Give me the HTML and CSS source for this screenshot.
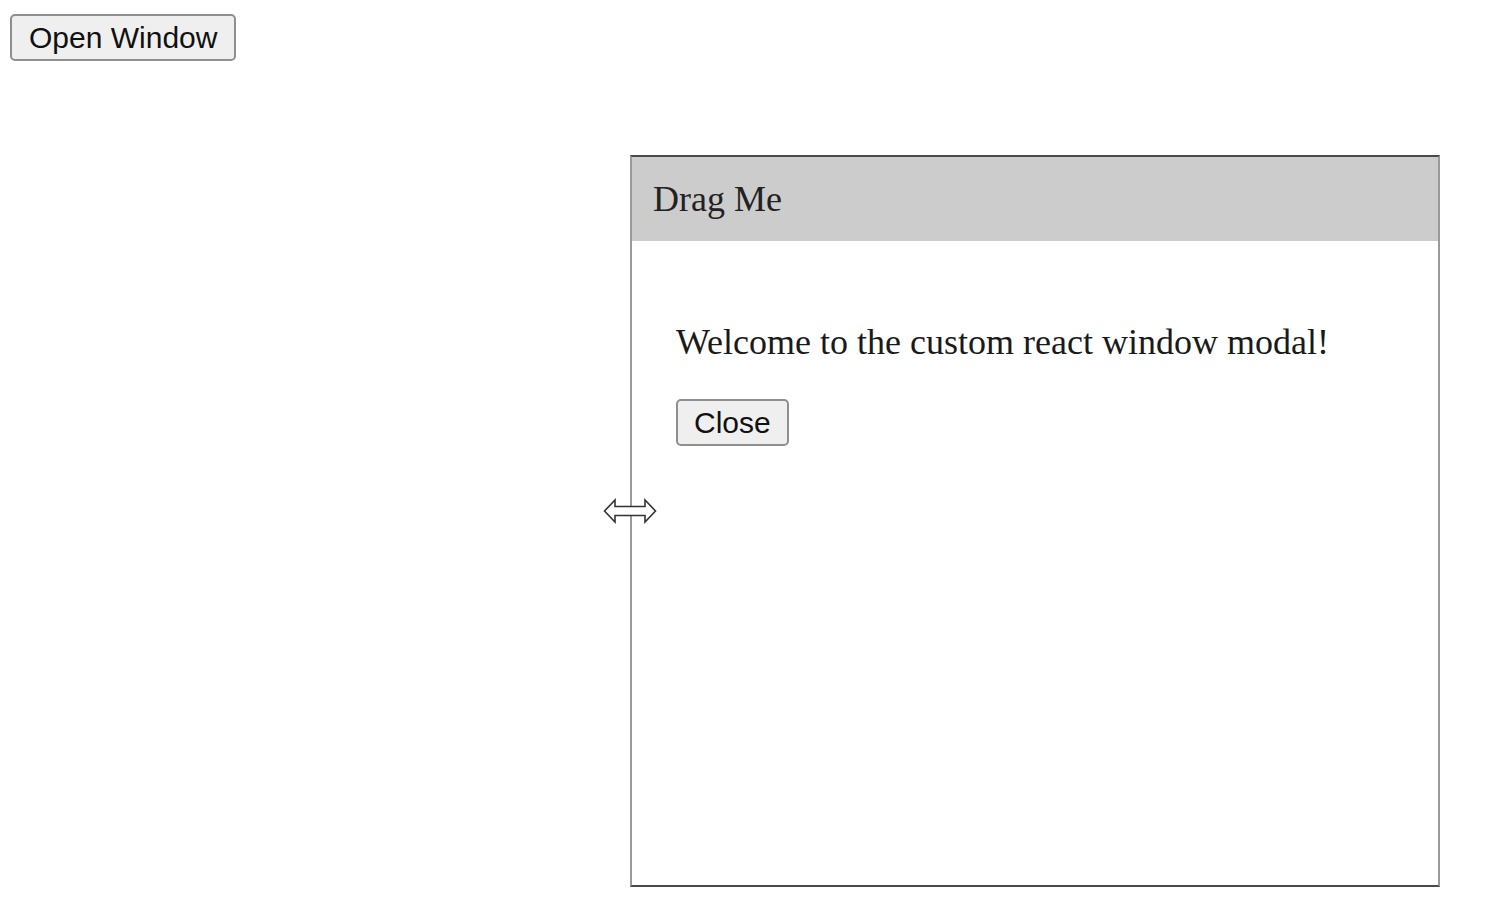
FILE: index.html
```html
<!DOCTYPE html>
<html lang="en">
<head>
    <meta charset="UTF-8" />
    <meta name="viewport" content="width=device-width, initial-scale=1" />
    <title>Custom React Window</title>
    <link rel="stylesheet" href="styles.css">
</head>
<body>
    <button class="btn open-button">Open Window</button>

    <div class="window">
        <div class="window-header">Drag Me</div>
        <div class="window-content">
            <p class="window-text">Welcome to the custom react window modal!</p>
            <button class="btn">Close</button>
        </div>
    </div>

    <!-- resize cursor sitting on the window's left edge -->
    <svg class="resize-cursor" width="54" height="26" viewBox="0 0 54 26">
        <path d="M1.5 13 L12 2 L12 8.5 L42 8.5 L42 2 L52.5 13 L42 24 L42 17.5 L12 17.5 L12 24 Z"
              fill="#fff" stroke="#333" stroke-width="1.6" stroke-linejoin="miter" />
    </svg>
</body>
</html>
```

FILE: styles.css
```css
body, html {
    margin: 0;
    padding: 0;
    height: 100%;
    background: #ffffff;
    overflow: hidden;
}
body {
    padding: 14px 10px;
    box-sizing: border-box;
    font-family: 'Liberation Serif', 'Times New Roman', serif;
    color: #1a1a1a;
}
.btn {
    font-family: 'Liberation Sans', Arial, sans-serif;
    font-size: 30px;
    line-height: 35px;
    color: #111;
    background-color: #efefef;
    border: 2px solid #8f8f8f;
    border-radius: 5px;
    padding: 4px 16px;
    cursor: pointer;
}
.btn:hover {
    background-color: #e5e5e5;
}
.open-button {
    padding: 4px 17px;
}
.window {
    position: absolute;
    left: 630px;
    top: 155px;
    width: 810px;
    height: 732px;
    box-sizing: border-box;
    border-top: 2px solid #4a4a4a;
    border-bottom: 2px solid #4a4a4a;
    border-left: 2px solid #9a9a9a;
    border-right: 2px solid #9a9a9a;
    background: #ffffff;
    display: flex;
    flex-direction: column;
}
.window-header {
    background-color: #cccccc;
    padding: 0 21px;
    height: 84px;
    display: flex;
    align-items: center;
    font-size: 36px;
    color: #222;
    cursor: move;
}
.window-content {
    padding: 45px 44px;
}
.window-text {
    font-size: 36px;
    margin: 36px 0;
    line-height: 41px;
}
.resize-cursor {
    position: absolute;
    left: 603px;
    top: 498px;
}
```
